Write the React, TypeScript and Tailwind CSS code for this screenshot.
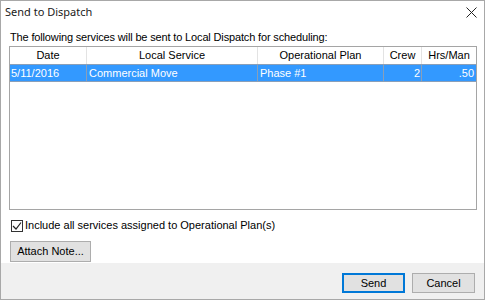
import React from "react";

type Row = {
  date: string;
  service: string;
  plan: string;
  crew: string;
  hrs: string;
};

const rows: Row[] = [
  { date: "5/11/2016", service: "Commercial Move", plan: "Phase #1", crew: "2", hrs: ".50" },
];

const cols = "grid grid-cols-[77px_171px_126px_38px_1fr]";

const App = () => {
  return (
    <div
      className="w-[485px] h-[300px] bg-white border border-[#a8a8a8] flex flex-col text-[#000]"
      style={{ fontFamily: '"Liberation Sans", Arial, sans-serif' }}
    >
      {/* title bar */}
      <div className="h-[22px] flex items-center justify-between pl-[4px] pr-[7px]">
        <span className="text-[11px] text-[#1a1a1a]" style={{ fontFamily: '"Noto Sans", "Open Sans", sans-serif' }}>
          Send to Dispatch
        </span>
        <svg width="11" height="11" viewBox="0 0 11 11" className="mt-[1px]">
          <path d="M0.5 0.5 L10.5 10.5 M10.5 0.5 L0.5 10.5" stroke="#222" strokeWidth="1" />
        </svg>
      </div>

      {/* body */}
      <div className="flex-1 flex flex-col pl-[8px] pr-[7px] pt-[7px]">
        <div className="text-[11px] leading-[14px] pl-[1px] tracking-[-0.15px]">
          The following services will be sent to Local Dispatch for scheduling:
        </div>

        <div className="mt-[2px] h-[164px] border border-[#a5a5a5] bg-white flex flex-col">
          <div className={`${cols} h-[17px] text-[11px] leading-[17px] text-center`}>
            <div className="border-r border-[#e3e3e3]">Date</div>
            <div className="border-r border-[#e3e3e3]">Local Service</div>
            <div className="border-r border-[#e3e3e3]">Operational Plan</div>
            <div className="border-r border-[#e3e3e3]">Crew</div>
            <div>Hrs/Man</div>
          </div>
          {rows.map((r) => (
            <div
              key={r.date + r.service}
              className={`${cols} h-[18px] bg-[#3399ff] border-y border-[#8a9fb8] text-white text-[11px] leading-[16px]`}
            >
              <div className="pl-[1px] border-r border-[#8a9fb8]">{r.date}</div>
              <div className="pl-[2px] border-r border-[#8a9fb8]">{r.service}</div>
              <div className="pl-[2px] border-r border-[#8a9fb8]">{r.plan}</div>
              <div className="pr-[1px] text-right border-r border-[#8a9fb8]">{r.crew}</div>
              <div className="pr-[2px] text-right">{r.hrs}</div>
            </div>
          ))}
        </div>

        <label className="mt-[9px] flex items-center gap-[2px] text-[11px] leading-[13px] pl-[2px]">
          <span className="w-[12px] h-[12px] border border-[#333] bg-white flex items-center justify-center">
            <svg width="10" height="10" viewBox="0 0 10 10">
              <path d="M1 5 L4 8 L9 1.5" fill="none" stroke="#222" strokeWidth="1.2" />
            </svg>
          </span>
          Include all services assigned to Operational Plan(s)
        </label>

        <div className="mt-[6px] pl-[1px]">
          <button
            type="button"
            className="w-[81px] h-[21px] bg-[#e1e1e1] border border-[#adadad] text-[11px] text-[#000]"
          >
            Attach Note...
          </button>
        </div>
      </div>

      {/* footer */}
      <div className="h-[36px] bg-[#f0f0f0] flex items-start justify-end gap-[7px] pt-[10px] pr-[9px]">
        <button
          type="button"
          className="w-[63px] h-[20px] bg-[#e1e1e1] border-2 border-[#0078d7] text-[11px] text-[#000]"
        >
          Send
        </button>
        <button
          type="button"
          className="w-[63px] h-[20px] bg-[#e1e1e1] border border-[#adadad] text-[11px] text-[#000]"
        >
          Cancel
        </button>
      </div>
    </div>
  );
};

export default App;
